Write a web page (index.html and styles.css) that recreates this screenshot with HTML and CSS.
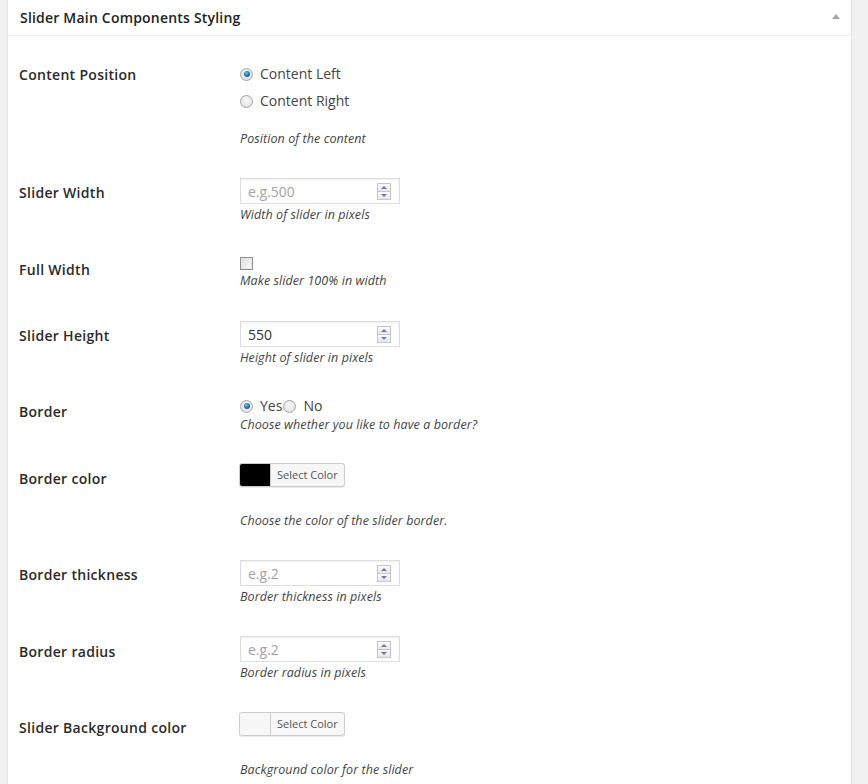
FILE: index.html
```html
<!DOCTYPE html>
<html>
<head>
<meta charset="utf-8">
<link rel="stylesheet" href="styles.css">
</head>
<body>
<div class="wrap">
  <div class="postbox">
    <div class="hndle">
      <h3 class="title">Slider Main Components Styling</h3>
      <span class="toggle"></span>
    </div>
    <div class="inside">
      <div class="row r1">
        <div class="label">Content Position</div>
        <div class="field">
          <label class="opt"><span class="radio checked"></span>Content Left</label>
          <label class="opt opt2"><span class="radio"></span>Content Right</label>
          <p class="desc d1">Position of the content</p>
        </div>
      </div>
      <div class="row r2">
        <div class="label">Slider Width</div>
        <div class="field">
          <div class="num"><span class="ph">e.g.500</span><span class="spin"><i class="up"></i><i class="down"></i></span></div>
          <p class="desc">Width of slider in pixels</p>
        </div>
      </div>
      <div class="row r3">
        <div class="label">Full Width</div>
        <div class="field">
          <span class="check"></span>
          <p class="desc dc">Make slider 100% in width</p>
        </div>
      </div>
      <div class="row r4">
        <div class="label">Slider Height</div>
        <div class="field">
          <div class="num"><span class="val">550</span><span class="spin"><i class="up"></i><i class="down"></i></span></div>
          <p class="desc">Height of slider in pixels</p>
        </div>
      </div>
      <div class="row r5">
        <div class="label">Border</div>
        <div class="field">
          <div class="inline">
            <label class="opt"><span class="radio checked"></span>Yes</label><label class="opt"><span class="radio"></span>No</label>
          </div>
          <p class="desc db">Choose whether you like to have a border?</p>
        </div>
      </div>
      <div class="row r6">
        <div class="label">Border color</div>
        <div class="field">
          <div class="colorbtn"><span class="swatch black"></span><span class="sel">Select Color</span></div>
          <p class="desc dcol">Choose the color of the slider border.</p>
        </div>
      </div>
      <div class="row r7">
        <div class="label">Border thickness</div>
        <div class="field">
          <div class="num"><span class="ph">e.g.2</span><span class="spin"><i class="up"></i><i class="down"></i></span></div>
          <p class="desc">Border thickness in pixels</p>
        </div>
      </div>
      <div class="row r8">
        <div class="label">Border radius</div>
        <div class="field">
          <div class="num n8"><span class="ph">e.g.2</span><span class="spin"><i class="up"></i><i class="down"></i></span></div>
          <p class="desc">Border radius in pixels</p>
        </div>
      </div>
      <div class="row r9">
        <div class="label">Slider Background color</div>
        <div class="field">
          <div class="colorbtn"><span class="swatch light"></span><span class="sel">Select Color</span></div>
          <p class="desc dcol">Background color for the slider</p>
        </div>
      </div>
    </div>
  </div>
</div>
</body>
</html>
```

FILE: styles.css
```css
html, body {
  margin: 0;
  padding: 0;
  background: #f1f1f1;
  font-family: "Open Sans", "Liberation Sans", sans-serif;
  color: #444;
}
.wrap {
  padding: 0 16px 0 7px;
}
.postbox {
  background: #fff;
  border: 1px solid #e5e5e5;
  border-top: none;
  box-shadow: 0 1px 1px rgba(0,0,0,0.04);
  min-height: 800px;
}
.hndle {
  height: 35px;
  border-bottom: 1px solid #eee;
  display: flex;
  align-items: center;
  justify-content: space-between;
  padding: 0 11px 0 12px;
}
.title {
  margin: 0;
  font-size: 14px;
  font-weight: 600;
  color: #222;
  line-height: 20px;
  letter-spacing: 0.2px;
}
.toggle {
  width: 0;
  height: 0;
  border-left: 4px solid transparent;
  border-right: 4px solid transparent;
  border-bottom: 5px solid #a0a5aa;
  margin-top: -2px;
}
.inside {
  padding: 8px 12px 0 11px;
}
.row {
  display: flex;
}
.label {
  width: 221px;
  flex: none;
  padding-top: 21px;
  font-size: 14px;
  font-weight: 600;
  line-height: 20px;
  color: #2a2a2a;
  letter-spacing: 0.3px;
}
.field {
  flex: 1;
}
.r1 { height: 118px; }
.r2 { height: 77px; }
.r3 { height: 66px; }
.r4 { height: 76px; }
.r5 { height: 67px; }
.r6 { height: 96px; }
.r7 { height: 77px; }
.r8 { height: 76px; }
.r9 { height: 90px; }

.desc {
  margin: 0;
  font-size: 12.5px;
  font-style: italic;
  line-height: 18px;
  color: #444;
  letter-spacing: 0.08px;
}
.opt {
  display: flex;
  align-items: center;
  font-size: 14px;
  line-height: 20px;
  color: #444;
}
.r1 .field { padding-top: 20px; }
.opt2 { margin-top: 7px; }
.d1 { margin-top: 19px; }

.radio {
  width: 11px;
  height: 11px;
  border-radius: 50%;
  border: 1px solid #a6a6a6;
  background: radial-gradient(circle at 50% 40%, #fafafa 0%, #e4e4e4 70%, #d2d2d2 100%);
  margin-right: 7px;
  box-sizing: content-box;
  display: flex;
  align-items: center;
  justify-content: center;
  flex: none;
}
.radio.checked::after {
  content: "";
  width: 6px;
  height: 6px;
  border-radius: 50%;
  background: radial-gradient(circle at 40% 35%, #7ec0ee 0%, #1f76b8 50%, #0d3f6e 100%);
}

.r2 .field, .r4 .field, .r7 .field { padding-top: 16px; }
.r8 .field { padding-top: 15px; }
.num {
  width: 160px;
  height: 26px;
  box-sizing: border-box;
  border: 1px solid #ddd;
  box-shadow: inset 0 1px 2px rgba(0,0,0,0.07);
  display: flex;
  align-items: center;
  justify-content: space-between;
  padding: 0 8px 0 7px;
  margin-bottom: 2px;
  font-size: 14px;
}
.ph { color: #a3a3a3; }
.val { color: #333; }
.spin {
  width: 12px;
  height: 15px;
  display: flex;
  flex-direction: column;
  border: 1px solid #c6c6c6;
  margin-top: 1px;
}
.spin i {
  flex: 1;
  display: flex;
  align-items: center;
  justify-content: center;
  background: linear-gradient(#fbfbfb, #e6e6e6);
}
.spin i.up { border-bottom: 1px solid #c6c6c6; }
.spin i::after {
  content: "";
  width: 0;
  height: 0;
  border-left: 3px solid transparent;
  border-right: 3px solid transparent;
}
.spin i.up::after { border-bottom: 3px solid #6b7ba8; }
.spin i.down::after { border-top: 3px solid #6b7ba8; }

.r3 .field { padding-top: 18px; }
.check {
  display: block;
  width: 11px;
  height: 11px;
  border: 1px solid #8f8f8f;
  background: linear-gradient(135deg, #dcdcdc, #fdfdfd);
  box-shadow: inset 0 0 0 1px #e8e8e8;
  margin-bottom: 2px;
}

.r5 .field { padding-top: 15px; }
.inline { display: flex; }
.inline .opt:first-child { margin-right: 1px; }

.r6 .field, .r9 .field { padding-top: 15px; }
.colorbtn {
  display: flex;
  width: 106px;
  height: 24px;
  box-sizing: border-box;
  border: 1px solid #ccc;
  border-radius: 3px;
  background: #f7f7f7;
  box-shadow: 0 1px 0 rgba(0,0,0,0.08);
  overflow: hidden;
  margin-left: -1px;
}
.swatch {
  width: 30px;
  flex: none;
  border-right: 1px solid #ccc;
}
.swatch.black { background: #000; }
.swatch.light { background: #f7f7f7; }
.sel {
  font-size: 11px;
  line-height: 22px;
  color: #555;
  padding-left: 6px;
}
.dcol { margin-top: 25px; }
```
